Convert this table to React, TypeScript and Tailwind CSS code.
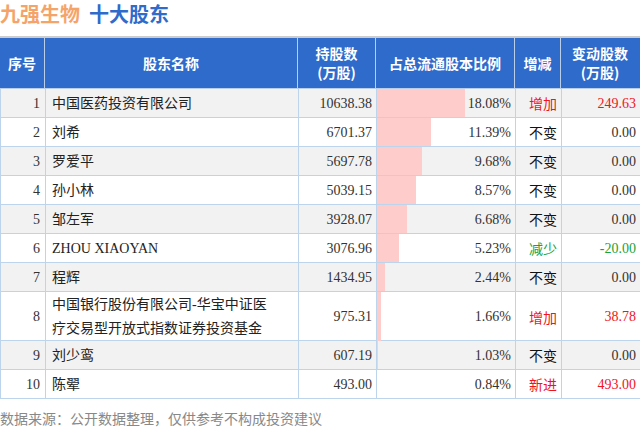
import React from "react";

type Row = {
  no: number;
  name: string[];
  hold: string;
  pct: string;
  bar: number;
  change: string;
  delta: string;
};

const rows: Row[] = [
  { no: 1, name: ["中国医药投资有限公司"], hold: "10638.38", pct: "18.08%", bar: 88, change: "增加", delta: "249.63" },
  { no: 2, name: ["刘希"], hold: "6701.37", pct: "11.39%", bar: 54, change: "不变", delta: "0.00" },
  { no: 3, name: ["罗爱平"], hold: "5697.78", pct: "9.68%", bar: 45, change: "不变", delta: "0.00" },
  { no: 4, name: ["孙小林"], hold: "5039.15", pct: "8.57%", bar: 39, change: "不变", delta: "0.00" },
  { no: 5, name: ["邹左军"], hold: "3928.07", pct: "6.68%", bar: 30, change: "不变", delta: "0.00" },
  { no: 6, name: ["ZHOU XIAOYAN"], hold: "3076.96", pct: "5.23%", bar: 22, change: "减少", delta: "-20.00" },
  { no: 7, name: ["程辉"], hold: "1434.95", pct: "2.44%", bar: 8, change: "不变", delta: "0.00" },
  {
    no: 8,
    name: ["中国银行股份有限公司-华宝中证医", "疗交易型开放式指数证券投资基金"],
    hold: "975.31",
    pct: "1.66%",
    bar: 4,
    change: "增加",
    delta: "38.78",
  },
  { no: 9, name: ["刘少鸾"], hold: "607.19", pct: "1.03%", bar: 1, change: "不变", delta: "0.00" },
  { no: 10, name: ["陈翚"], hold: "493.00", pct: "0.84%", bar: 0, change: "新进", delta: "493.00" },
];

// 增减 label colour, and the matching colour for the 变动股数 figure
const labelColor = (c: string) =>
  c === "减少" ? "text-[#1aa33a]" : c === "不变" ? "text-[#111]" : "text-[#f0141e]";
const deltaColor = (c: string) =>
  c === "减少" ? "text-[#1aa33a]" : c === "不变" ? "text-[#333]" : "text-[#f0141e]";

const cols = "grid grid-cols-[45px_253px_78px_139px_46px_78px]";

export default function App() {
  return (
    <div
      className="w-[640px] h-[430px] bg-white overflow-hidden"
      style={{ fontFamily: '"Liberation Serif", "Noto Sans CJK SC", serif' }}
    >
      <div
        className="h-[36px] flex items-start pt-[2px] gap-[9px] text-[20px] font-bold leading-[24px]"
        style={{ fontFamily: '"Noto Sans CJK SC", sans-serif' }}
      >
        <span className="text-[#f5a469]">九强生物</span>
        <span className="text-[#2f6bcb]">十大股东</span>
      </div>

      <div className="border-t-2 border-[#cccccc]">
        <div
          className={`${cols} h-[51px] bg-[#2f6bcb] text-white text-[14px] font-bold leading-[19px] border-b border-[#b9cfe9]`}
          style={{ fontFamily: '"Noto Sans CJK SC", sans-serif' }}
        >
          <div className="flex items-center justify-center border-r border-[#b9cfe9]">序号</div>
          <div className="flex items-center justify-center border-r border-[#b9cfe9]">股东名称</div>
          <div className="flex flex-col items-center justify-center border-r border-[#b9cfe9]">
            <span>持股数</span>
            <span>(万股)</span>
          </div>
          <div className="flex items-center justify-center border-r border-[#b9cfe9]">占总流通股本比例</div>
          <div className="flex items-center justify-center border-r border-[#b9cfe9]">增减</div>
          <div className="flex flex-col items-center justify-center">
            <span>变动股数</span>
            <span>(万股)</span>
          </div>
        </div>

        {rows.map((r, i) => (
          <div
            key={r.no}
            className={`${cols} border-b border-l border-[#bcd4ec] text-[14px] text-[#333] ${
              r.name.length > 1 ? "h-[49px]" : "h-[29px]"
            } ${i % 2 === 0 ? "bg-[#f2f2f2]" : "bg-white"}`}
          >
            <div className="flex items-center justify-end pr-[5px] border-r border-[#bcd4ec] -ml-px">{r.no}</div>
            <div className="flex flex-col justify-center pl-[6px] pt-px leading-[24px] border-r border-[#bcd4ec] text-[#222]">
              {r.name.map((n) => (
                <span key={n}>{n}</span>
              ))}
            </div>
            <div className="flex items-center justify-end pr-[4px] border-r border-[#bcd4ec]">{r.hold}</div>
            <div className="relative flex items-center justify-end pr-[4px] border-r border-[#bcd4ec]">
              <div className="absolute left-0 top-0 bottom-0 bg-[#ffcccc]" style={{ width: r.bar }} />
              <span className="relative">{r.pct}</span>
            </div>
            <div
              className={`flex items-center justify-end pr-[4px] pt-[3px] border-r border-[#bcd4ec] ${labelColor(r.change)}`}
            >
              {r.change}
            </div>
            <div className={`flex items-center justify-end pr-[4px] ${deltaColor(r.change)}`}>{r.delta}</div>
          </div>
        ))}
      </div>

      <div
        className="pt-[9px] text-[14px] text-[#888] leading-[20px]"
        style={{ fontFamily: '"Noto Sans CJK SC", sans-serif' }}
      >
        数据来源：公开数据整理，仅供参考不构成投资建议
      </div>
    </div>
  );
}
